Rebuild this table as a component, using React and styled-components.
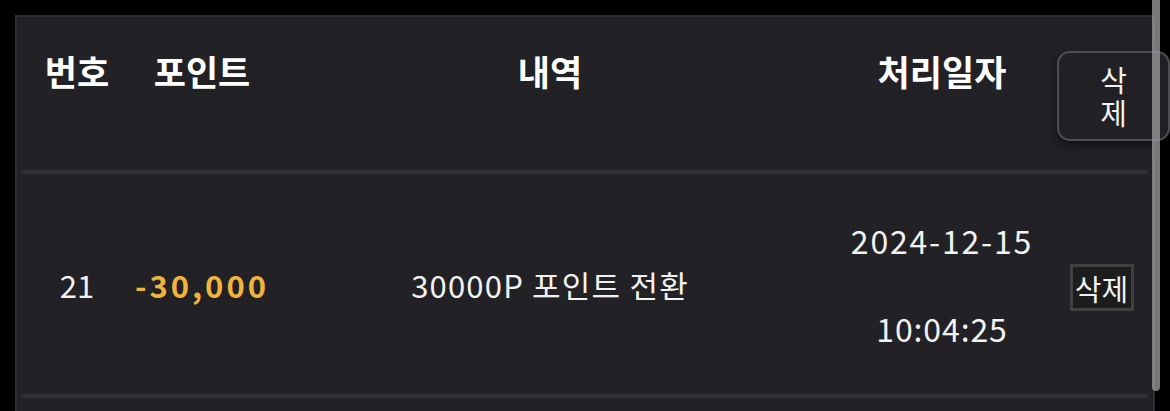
import styled, { createGlobalStyle } from "styled-components";

const GlobalStyle = createGlobalStyle`
    html, body {
        margin: 0;
        background: #000;
    }
    body {
        font-family: "Noto Sans CJK KR", "Noto Sans", sans-serif;
        color: #f2f2f2;
    }
`;

const history = [
    {id: 21, point: '-30,000', memo: '30000P 포인트 전환', date: '2024-12-15', time: '10:04:25'},
];

export default function App() {
    return (
        <>
            <GlobalStyle />
            <Page>
                <Panel>
                    <Table>
                        <HeadRow>
                            <HeadCell>번호</HeadCell>
                            <HeadCell>포인트</HeadCell>
                            <HeadCell>내역</HeadCell>
                            <HeadCell>처리일자</HeadCell>
                            <HeadAction>
                                <BulkDelete>삭<br />제</BulkDelete>
                            </HeadAction>
                        </HeadRow>
                        {history.map(item => (
                            <Row key={item.id}>
                                <Cell>{item.id}</Cell>
                                <Cell $accent>{item.point}</Cell>
                                <Cell $spacing="1.2px">{item.memo}</Cell>
                                <DateCell>
                                    <DateLine $spacing="1.8px">{item.date}</DateLine>
                                    <DateLine $spacing="0.9px">{item.time}</DateLine>
                                </DateCell>
                                <Cell>
                                    <DeleteButton>삭제</DeleteButton>
                                </Cell>
                            </Row>
                        ))}
                        <Row />
                    </Table>
                </Panel>
                <ScrollThumb />
            </Page>
        </>
    );
}

const columns = '112px 138px 558px 226px 93px';

const Page = styled.div`
    position: relative;
    height: 411px;
    overflow: hidden;
    padding: 15px 0 0 15px;
    box-sizing: border-box;
`;

const Panel = styled.div`
    width: 1140px;
    height: 600px;
    box-sizing: border-box;
    background: #222126;
    border: 2px solid #2d2d32;
    padding: 0 5px 0 4px;
`;

const Table = styled.div`
    display: flex;
    flex-direction: column;
`;

const HeadRow = styled.div`
    display: grid;
    grid-template-columns: ${columns};
    height: 153px;
    border-bottom: 4px solid #2f2f34;
`;

const HeadCell = styled.div`
    padding-top: 30px;
    text-align: center;
    font-size: 35px;
    font-weight: 700;
    line-height: 48px;
    color: #fff;
`;

const HeadAction = styled.div`
    padding-top: 34px;
    position: relative;
    z-index: 1;
`;

const BulkDelete = styled.button`
    width: 113px;
    height: 90px;
    margin-left: 2px;
    box-sizing: border-box;
    border: 2px solid rgba(110, 110, 115, 0.6);
    border-radius: 13px;
    background: #212024;
    box-shadow: 0 4px 10px rgba(0, 0, 0, 0.55);
    color: #f2f2f2;
    font-family: inherit;
    font-size: 29px;
    line-height: 33px;
    padding: 0;
`;

const Row = styled.div`
    display: grid;
    grid-template-columns: ${columns};
    height: 220px;
    border-bottom: 4px solid #2f2f34;
`;

const Cell = styled.div`
    display: flex;
    align-items: center;
    justify-content: center;
    font-size: 31px;
    font-weight: ${p => p.$accent ? 600 : 400};
    letter-spacing: ${p => p.$accent ? '3px' : (p.$spacing || '0')};
    color: ${p => p.$accent ? '#f0b43d' : '#f2f2f2'};
`;

const DateCell = styled.div`
    display: flex;
    flex-direction: column;
    align-items: center;
    justify-content: center;
    gap: 42px;
    font-size: 32px;
    line-height: 46px;
`;

const DateLine = styled.span`
    letter-spacing: ${p => p.$spacing};
`;

const DeleteButton = styled.button`
    width: 64px;
    height: 47px;
    box-sizing: border-box;
    border: 3px solid #404040;
    background: #1d1d1d;
    color: #f2f2f2;
    font-family: inherit;
    font-size: 29px;
    padding: 0;
    margin-top: 6px;
`;

const ScrollThumb = styled.div`
    position: absolute;
    top: 0;
    left: 1152px;
    width: 8px;
    height: 391px;
    background: rgba(160, 160, 160, 0.75);
    border-radius: 0 0 4px 4px;
    z-index: 2;
`;
